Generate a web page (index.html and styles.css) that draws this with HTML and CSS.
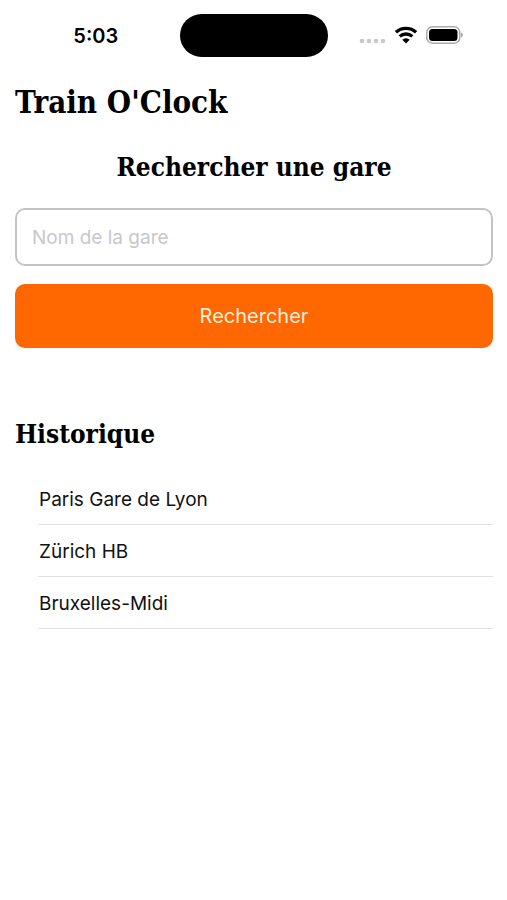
FILE: index.html
```html
<!DOCTYPE html>
<html lang="fr">
<head>
<meta charset="utf-8">
<meta name="viewport" content="width=device-width, initial-scale=1">
<title>Train O'Clock</title>
<link rel="stylesheet" href="styles.css">
</head>
<body>
<header class="status">
  <span class="time">5:03</span>
  <span class="island"></span>
  <span class="indicators">
    <svg width="28" height="22" viewBox="0 0 28 22" aria-hidden="true"><g fill="#c9c9c9"><circle cx="4" cy="17" r="2.3"/><circle cx="11" cy="17" r="2.3"/><circle cx="18" cy="17" r="2.3"/><circle cx="25" cy="17" r="2.3"/></g></svg>
    <svg width="24" height="18" viewBox="0 0 24 18" aria-hidden="true"><g fill="none" stroke="#000" stroke-width="3.3"><path d="M1.9 6.2a15 15 0 0 1 20.2 0"/><path d="M5.7 10.4a9.4 9.4 0 0 1 12.6 0"/></g><path d="M12 17.4l-3.7-3.6a5 5 0 0 1 7.4 0z"/></svg>
    <svg width="38" height="18" viewBox="0 0 38 18" aria-hidden="true"><rect x=".8" y=".8" width="33" height="16.4" rx="5.5" fill="#fff" stroke="#aaa" stroke-width="1.5"/><rect x="3" y="3" width="28.5" height="12" rx="3.5"/><path d="M35 6.5c2.6.8 2.6 4.2 0 5z" fill="#aaa"/></svg>
  </span>
</header>
<main class="page">
  <h1>Train O'Clock</h1>
  <form class="search">
    <h2><label for="station">Rechercher une gare</label></h2>
    <input id="station" type="text" placeholder="Nom de la gare">
    <button type="button">Rechercher</button>
  </form>
  <section class="history">
    <h2>Historique</h2>
    <ul>
      <li>Paris Gare de Lyon</li>
      <li>Zürich HB</li>
      <li>Bruxelles-Midi</li>
    </ul>
  </section>
</main>
</body>
</html>
```
FILE: styles.css
```css
* { box-sizing: border-box; }
body { margin: 0; background: #fff; color: #000; font-family: Inter, "Liberation Sans", sans-serif; }
.status { display: grid; grid-template-columns: 1fr 148px 1fr; align-items: center; padding: 14px 16px 0; }
.time { justify-self: center; padding-right: 4px; font-size: 20px; line-height: 24px; font-weight: 600; }
.island { height: 43px; border-radius: 22px; background: #000; }
.indicators { display: flex; align-items: center; justify-content: flex-end; gap: 8px; padding: 0 27px 1px 0; }
.page { padding: 25px 14px 24px 15px; }
h1, h2 { margin: 0; font-family: "DejaVu Serif Condensed", "DejaVu Serif", serif; font-weight: 700; }
h1 { font-size: 31px; line-height: 40px; }
h2 { font-size: 26px; line-height: 36px; }
.search { display: flex; flex-direction: column; margin-top: 27px; }
.search h2 { text-align: center; }
input, button { font: inherit; width: 100%; border-radius: 10px; }
input { height: 58px; margin-top: 23px; padding: 0 15px; border: 2px solid #c4c4c4; background: #fff; color: #000; font-size: 19px; }
input::placeholder { color: #c8c8ca; opacity: 1; }
button { height: 64px; margin-top: 18px; border: 0; background: #ff6700; color: #ffeedd; font-size: 20px; }
.history { margin-top: 68px; }
ul { list-style: none; margin: 21px 0 0 23px; padding: 0; }
li { padding: 3px 0 0 1px; font-size: 19px; line-height: 48px; border-bottom: 1px solid #e2e2e2; color: #111; }
```
